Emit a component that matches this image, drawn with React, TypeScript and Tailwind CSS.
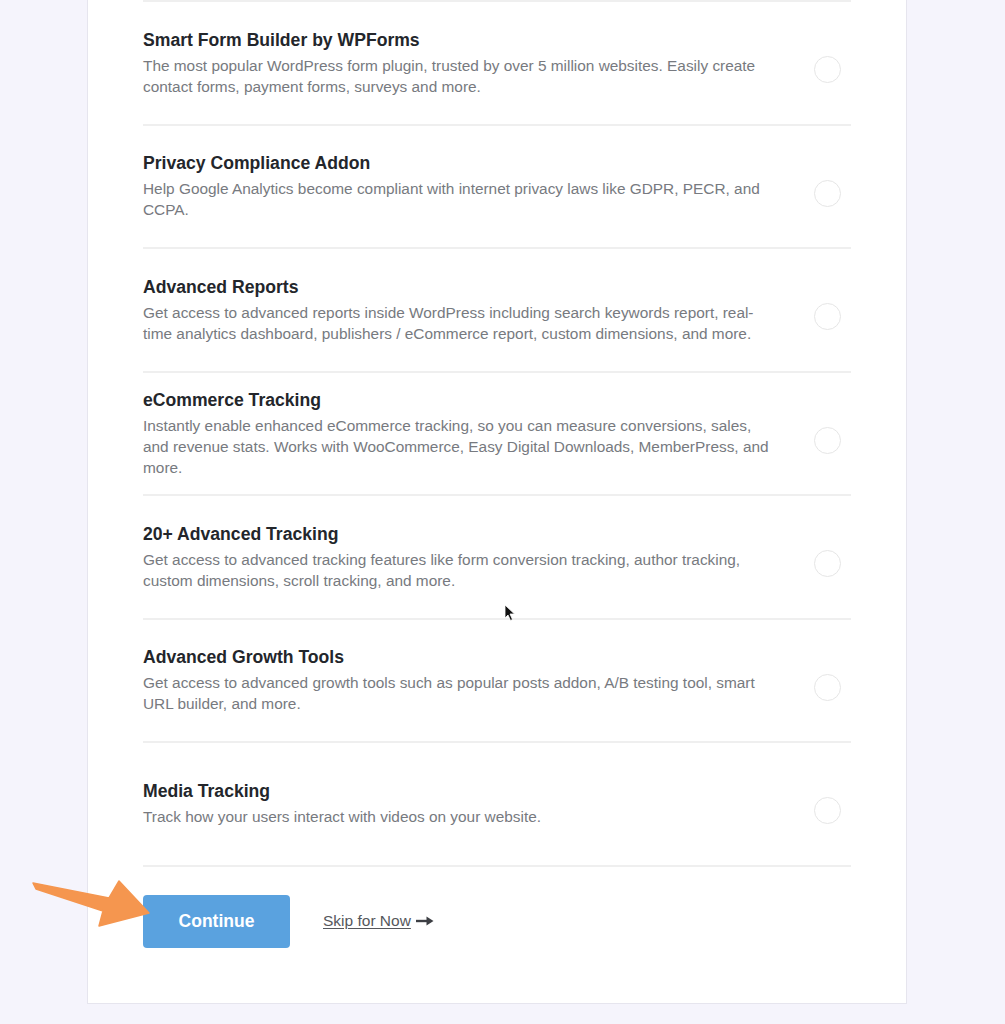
import React from "react";

const addons = [
  {
    title: "Smart Form Builder by WPForms",
    text: "The most popular WordPress form plugin, trusted by over 5 million websites. Easily create contact forms, payment forms, surveys and more.",
  },
  {
    title: "Privacy Compliance Addon",
    text: "Help Google Analytics become compliant with internet privacy laws like GDPR, PECR, and CCPA.",
  },
  {
    title: "Advanced Reports",
    text: "Get access to advanced reports inside WordPress including search keywords report, real-time analytics dashboard, publishers / eCommerce report, custom dimensions, and more.",
  },
  {
    title: "eCommerce Tracking",
    text: "Instantly enable enhanced eCommerce tracking, so you can measure conversions, sales, and revenue stats. Works with WooCommerce, Easy Digital Downloads, MemberPress, and more.",
  },
  {
    title: "20+ Advanced Tracking",
    text: "Get access to advanced tracking features like form conversion tracking, author tracking, custom dimensions, scroll tracking, and more.",
  },
  {
    title: "Advanced Growth Tools",
    text: "Get access to advanced growth tools such as popular posts addon, A/B testing tool, smart URL builder, and more.",
  },
  {
    title: "Media Tracking",
    text: "Track how your users interact with videos on your website.",
  },
];

function PointerArrow() {
  return (
    <svg className="pointer-events-none absolute left-[30px] top-[878px]" width="124" height="52" viewBox="30 878 124 52">
      <polygon
        points="33,883 36,889 103,911 99,926 149,913 119,881 109,898"
        fill="#f5964f"
        stroke="#f5964f"
        strokeWidth="1.5"
        strokeLinejoin="round"
      />
    </svg>
  );
}

function Cursor() {
  return (
    <svg className="pointer-events-none absolute left-[504px] top-[604px]" width="12" height="18" viewBox="0 0 12 18">
      <path d="M1 1 L1 14 L4 11 L6.5 16.5 L8.5 15.5 L6 10 L10.5 10 Z" fill="#111" stroke="#fff" strokeWidth="0.8" />
    </svg>
  );
}

export default function App() {
  return (
    <div className="relative min-h-[1024px] w-full bg-[#f5f4fc] font-['Liberation_Sans',Arial,sans-serif]">
      <div className="ml-[87px] w-[820px] border border-t-0 border-[#e6e5ee] bg-white px-[55px] pb-[55px]">
        <div className="border-t-2 border-[#efefef]">
          {addons.map((a) => (
            <div key={a.title} className="flex h-[123.5px] items-center justify-between border-b-2 border-[#efefef]">
              <div className="w-[634px]">
                <h2 className="text-[17.6px] font-bold leading-[22px] text-[#23262b]">{a.title}</h2>
                <p className="mt-[4px] text-[15.4px] leading-[21px] text-[#777a80]">{a.text}</p>
              </div>
              <span className="mr-[10px] mt-[14px] h-[27px] w-[27px] rounded-full border-[1.5px] border-[#e6e6e6] bg-white" />
            </div>
          ))}
        </div>
        <div className="mt-[28px] flex items-center gap-[33px]">
          <button className="h-[53px] w-[147px] rounded-[4px] bg-[#5aa2df] text-[17.5px] font-bold text-white">Continue</button>
          <a href="#" className="flex items-center gap-[5px] text-[15.5px] text-[#55575c]">
            <span className="underline underline-offset-[2px]">Skip for Now</span>
            <svg width="18" height="10" viewBox="0 0 18 10">
              <path d="M0 5 H12" stroke="#3d3f44" strokeWidth="2.4" />
              <path d="M10.5 0.5 L17.5 5 L10.5 9.5 Z" fill="#3d3f44" />
            </svg>
          </a>
        </div>
      </div>
      <PointerArrow />
      <Cursor />
    </div>
  );
}
